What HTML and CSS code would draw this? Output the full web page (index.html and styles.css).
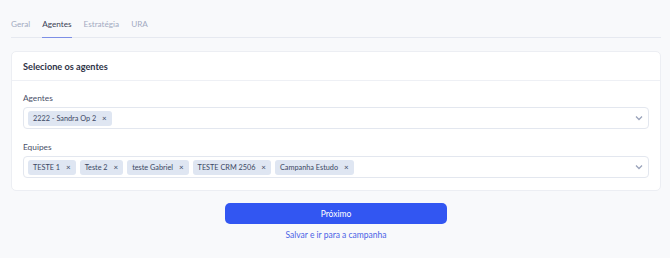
FILE: index.html
```html
<!DOCTYPE html>
<html lang="pt-BR">
<head>
    <meta charset="UTF-8">
    <meta name="viewport" content="width=device-width, initial-scale=1.0">
    <title>Campanha - Agentes</title>
    <link rel="stylesheet" href="styles.css">
</head>
<body>
    <div class="page">
        <nav class="tabs">
            <span class="tab">Geral</span>
            <span class="tab active">Agentes</span>
            <span class="tab">Estratégia</span>
            <span class="tab">URA</span>
        </nav>

        <div class="card">
            <div class="card-header">Selecione os agentes</div>
            <div class="card-body">
                <div class="field">
                    <label>Agentes</label>
                    <div class="multi-select">
                        <div class="chips">
                            <span class="chip">2222 - Sandra Op 2 <span class="x">×</span></span>
                        </div>
                        <svg class="caret" width="8" height="6" viewBox="0 0 8 6"><path d="M1 1.5 L4 4.5 L7 1.5" fill="none" stroke="#9aa3ba" stroke-width="1.3"/></svg>
                    </div>
                </div>
                <div class="field">
                    <label>Equipes</label>
                    <div class="multi-select">
                        <div class="chips">
                            <span class="chip">TESTE 1 <span class="x">×</span></span>
                            <span class="chip">Teste 2 <span class="x">×</span></span>
                            <span class="chip">teste Gabriel <span class="x">×</span></span>
                            <span class="chip">TESTE CRM 2506 <span class="x">×</span></span>
                            <span class="chip">Campanha Estudo <span class="x">×</span></span>
                        </div>
                        <svg class="caret" width="8" height="6" viewBox="0 0 8 6"><path d="M1 1.5 L4 4.5 L7 1.5" fill="none" stroke="#9aa3ba" stroke-width="1.3"/></svg>
                    </div>
                </div>
            </div>
        </div>

        <div class="actions">
            <button class="btn-primary">Próximo</button>
            <a class="link" href="#">Salvar e ir para a campanha</a>
        </div>
    </div>
</body>
</html>
```

FILE: styles.css
```css
body {
    margin: 0;
    background-color: #f8f9fb;
    font-family: Lato, "Noto Sans", sans-serif;
    color: #3a3f55;
}
.page {
    padding: 17px 9px 0 11px;
}
.tabs {
    display: flex;
    gap: 12px;
    border-bottom: 1px solid #e6e9f0;
    font-size: 8.2px;
    margin-bottom: 13px;
}
.tab {
    color: #a3abc2;
    padding: 2px 0 8px;
    border-bottom: 1px solid transparent;
    margin-bottom: -1px;
}
.tab.active {
    color: #3a3f55;
    border-bottom-color: #7d8fe6;
}
.card {
    background-color: white;
    border: 1px solid #eceef3;
    border-radius: 5px;
}
.card-header {
    font-size: 9.2px;
    font-weight: 700;
    padding: 9px 11px 8px;
    border-bottom: 1px solid #eef0f5;
    color: #2e3347;
}
.card-body {
    padding: 12px 11px 12px;
    display: flex;
    flex-direction: column;
    gap: 13px;
}
.field label {
    display: block;
    font-size: 8.3px;
    color: #4a5068;
    margin-bottom: 4px;
}
.multi-select {
    display: flex;
    align-items: center;
    justify-content: space-between;
    border: 1px solid #e3e7ef;
    border-radius: 4px;
    height: 20px;
    padding: 0 4px;
}
.chips {
    display: flex;
    gap: 4px;
}
.chip {
    background-color: #dfe6f2;
    color: #3b4662;
    font-size: 7.3px;
    border-radius: 3px;
    padding: 2px 5px;
    line-height: 10px;
}
.chip .x {
    margin-left: 4px;
    font-size: 8px;
}
.caret {
    margin-right: 1px;
}
.actions {
    display: flex;
    flex-direction: column;
    align-items: center;
    gap: 6px;
    margin-top: 12px;
}
.btn-primary {
    width: 222px;
    height: 21px;
    background-color: #3256f2;
    color: white;
    border: none;
    border-radius: 5px;
    font-family: inherit;
    font-size: 8.5px;
}
.link {
    color: #4a62e6;
    font-size: 8.5px;
    text-decoration: none;
}
```
